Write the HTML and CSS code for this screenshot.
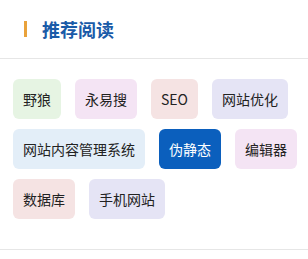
FILE: index.html
```html
<!DOCTYPE html>
<html lang="zh-CN">
  <head>
    <meta charset="UTF-8" />
    <meta name="viewport" content="width=device-width, initial-scale=1.0" />
    <title>推荐阅读</title>
    <link rel="stylesheet" href="styles.css">
  </head>
  <body>
    <div class="widget">
      <div class="widget-head">
        <span class="bar"></span>
        <h3>推荐阅读</h3>
      </div>
      <div class="tags">
        <a href="#" class="tag green">野狼</a>
        <a href="#" class="tag purple">永易搜</a>
        <a href="#" class="tag pink">SEO</a>
        <a href="#" class="tag lavender">网站优化</a>
        <a href="#" class="tag blue">网站内容管理系统</a>
        <a href="#" class="tag active">伪静态</a>
        <a href="#" class="tag purple">编辑器</a>
        <a href="#" class="tag pink">数据库</a>
        <a href="#" class="tag lavender">手机网站</a>
      </div>
    </div>
  </body>
</html>
```

FILE: styles.css
```css
body {
  margin: 0;
  background-color: #ffffff;
  font-family: "Noto Sans CJK SC", "Noto Sans", sans-serif;
}

.widget {
  border-bottom: 1px solid #e6e6e6;
}

.widget-head {
  display: flex;
  align-items: center;
  height: 59px;
  padding-left: 24px;
  border-bottom: 1px solid #e6e6e6;
  box-sizing: border-box;
}

.bar {
  width: 3px;
  height: 16px;
  background-color: #e9a23b;
  margin-right: 15px;
}

.widget-head h3 {
  margin: 0;
  font-size: 18px;
  font-weight: bold;
  color: #1a5ba8;
  line-height: 24px;
}

.tags {
  display: flex;
  flex-wrap: wrap;
  gap: 10px 14px;
  padding: 20px 0 30px 13px;
}

.tag {
  display: block;
  height: 40px;
  line-height: 40px;
  padding: 0 10px;
  border-radius: 6px;
  font-size: 14px;
  color: #222222;
  text-decoration: none;
}

.green {
  background-color: #e6f4e3;
}

.purple {
  background-color: #f4e4f4;
}

.pink {
  background-color: #f5e3e3;
}

.lavender {
  background-color: #e5e4f5;
}

.blue {
  background-color: #e3eef8;
}

.active {
  background-color: #0b5fbd;
  color: #ffffff;
}
```
